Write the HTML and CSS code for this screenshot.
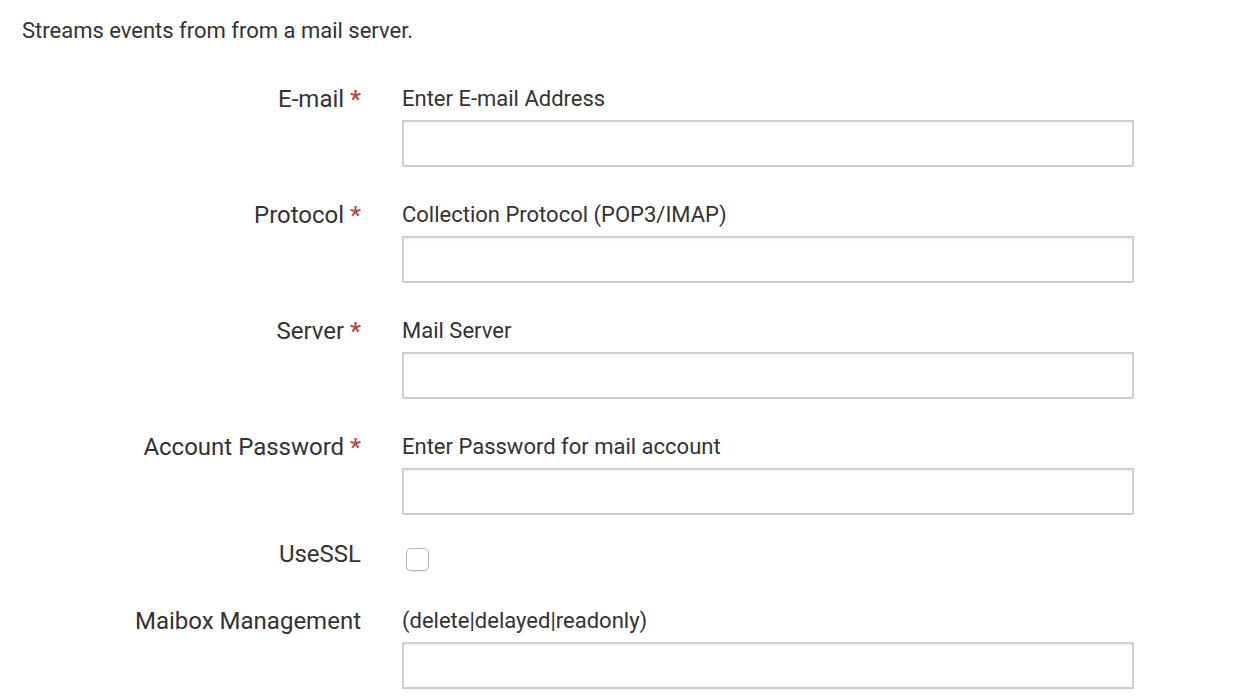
FILE: index.html
```html
<!DOCTYPE html>
<html>
<head>
<meta charset="utf-8">
<link rel="stylesheet" href="styles.css">
</head>
<body>
<div class="page">
  <p class="desc">Streams events from from a mail server.</p>
  <form class="form">
    <div class="row">
      <label class="label">E-mail <span class="req">*</span></label>
      <div class="field">
        <div class="help">Enter E-mail Address</div>
        <input class="text" type="text">
      </div>
    </div>
    <div class="row">
      <label class="label">Protocol <span class="req">*</span></label>
      <div class="field">
        <div class="help">Collection Protocol (POP3/IMAP)</div>
        <input class="text" type="text">
      </div>
    </div>
    <div class="row">
      <label class="label">Server <span class="req">*</span></label>
      <div class="field">
        <div class="help">Mail Server</div>
        <input class="text" type="text">
      </div>
    </div>
    <div class="row">
      <label class="label">Account Password <span class="req">*</span></label>
      <div class="field">
        <div class="help">Enter Password for mail account</div>
        <input class="text" type="password">
      </div>
    </div>
    <div class="row row-check">
      <label class="label">UseSSL</label>
      <div class="field">
        <input class="check" type="checkbox">
      </div>
    </div>
    <div class="row row-last">
      <label class="label">Maibox Management</label>
      <div class="field">
        <div class="help">(delete|delayed|readonly)</div>
        <input class="text" type="text">
      </div>
    </div>
  </form>
</div>
</body>
</html>
```
FILE: styles.css
```css
html, body {
  margin: 0;
  padding: 0;
  background: #fff;
}
body {
  font-family: Roboto, "Liberation Sans", sans-serif;
  color: #333;
}
.page {
  padding: 19px 0 0 22px;
}
.desc {
  margin: 0;
  font-size: 22px;
  line-height: 24px;
}
.form {
  margin-top: 43px;
}
.row {
  display: grid;
  grid-template-columns: 339px 732px;
  column-gap: 41px;
  margin-bottom: 35px;
}
.label {
  text-align: right;
  font-size: 24px;
  line-height: 24px;
  padding-top: 1px;
}
.req {
  color: #b94a48;
  font-weight: 700;
}
.help {
  font-size: 22px;
  line-height: 24px;
  padding-top: 1px;
}
.text {
  display: block;
  box-sizing: border-box;
  width: 732px;
  height: 47px;
  margin: 9px 0 0;
  border: 2px solid #cfcfcf;
  border-radius: 0;
  box-shadow: inset 0 2px 2px rgba(0,0,0,0.05);
  background: #fff;
  padding: 0 10px;
  font: inherit;
  font-size: 20px;
  outline: none;
}
.row-check {
  margin-top: -9px;
  margin-bottom: 37px;
}
.check {
  -webkit-appearance: none;
  appearance: none;
  display: block;
  box-sizing: border-box;
  width: 23px;
  height: 23px;
  margin: 7px 0 0 4px;
  border: 1.5px solid #b5b5b5;
  border-radius: 5px;
  background: #fff;
  box-shadow: 0 1px 1px rgba(0,0,0,0.08);
}
.row-last {
  margin-bottom: 0;
}
```
